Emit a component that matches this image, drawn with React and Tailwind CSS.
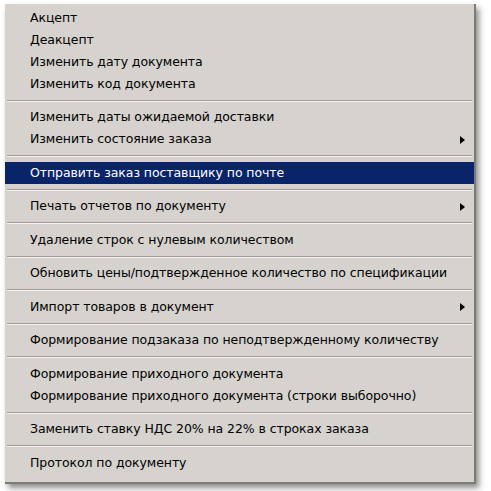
import React from 'react';

const items = [
  { label: 'Акцепт' },
  { label: 'Деакцепт' },
  { label: 'Изменить дату документа' },
  { label: 'Изменить код документа' },
  { sep: true },
  { label: 'Изменить даты ожидаемой доставки' },
  { label: 'Изменить состояние заказа', sub: true },
  { sep: true },
  { label: 'Отправить заказ поставщику по почте', active: true },
  { sep: true },
  { label: 'Печать отчетов по документу', sub: true },
  { sep: true },
  { label: 'Удаление строк с нулевым количеством' },
  { sep: true },
  { label: 'Обновить цены/подтвержденное количество по спецификации' },
  { sep: true },
  { label: 'Импорт товаров в документ', sub: true },
  { sep: true },
  { label: 'Формирование подзаказа по неподтвержденному количеству' },
  { sep: true },
  { label: 'Формирование приходного документа' },
  { label: 'Формирование приходного документа (строки выборочно)' },
  { sep: true },
  { label: 'Заменить ставку НДС 20% на 22% в строках заказа' },
  { sep: true },
  { label: 'Протокол по документу' },
];

function Arrow({ active }) {
  return (
    <span
      className={
        'w-0 h-0 border-y-[4.5px] border-y-transparent border-l-[5px] ' +
        (active ? 'border-l-white' : 'border-l-black')
      }
    />
  );
}

export default function App() {
  return (
    <div className="w-[491px] h-[491px] bg-white pt-[4px] pl-[5px]">
      <div
        className="w-[471px] h-[480px] bg-[#d6d3ce] border-r-2 border-b-2 border-[#7c7b78] pt-[3px] shadow-[3px_4px_6px_rgba(0,0,0,0.45)]"
        style={{ fontFamily: '"DejaVu Sans", sans-serif' }}
      >
        {items.map((it, i) =>
          it.sep ? (
            <div key={i} className="h-[11.5px] flex flex-col justify-center px-[2px]">
              <div className="h-px bg-[#a09d98]" />
              <div className="h-px bg-[#f4f3f1]" />
            </div>
          ) : (
            <div
              key={i}
              className={
                'h-[22px] flex items-center justify-between pl-[25px] pr-[9px] text-[12.5px] tracking-[-0.08px] ' +
                (it.active ? 'bg-[#0a246a] text-white' : 'text-black')
              }
            >
              <span>{it.label}</span>
              {it.sub && <Arrow active={it.active} />}
            </div>
          )
        )}
      </div>
    </div>
  );
}
